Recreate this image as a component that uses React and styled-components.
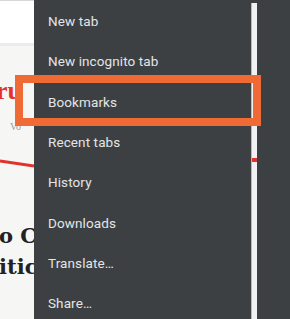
import React from "react";
import styled, { createGlobalStyle } from "styled-components";

const GlobalStyle = createGlobalStyle`
  html, body {
    margin: 0;
    padding: 0;
    background: #3c4043;
  }
  body {
    font-family: Roboto, "Liberation Sans", sans-serif;
  }
`;

const Screen = styled("div")({
  position: "relative",
  display: "flex",
  width: 290,
  height: 319,
  overflow: "hidden",
  backgroundColor: "#3c4043",
});

const Page = styled("div")({
  width: 34,
  flexShrink: 0,
  overflow: "hidden",
  backgroundColor: "#f6f6f5",
  display: "flex",
  flexDirection: "column",
  borderTop: "1px solid #d8d8d8",
});

const PageHeader = styled("div")({
  height: 42,
  backgroundColor: "#ffffff",
  borderBottom: "3px solid #ebebea",
});

const Masthead = styled("div")({
  fontFamily: '"Liberation Serif", "DejaVu Serif", serif',
  fontWeight: 700,
  fontSize: 26,
  color: "#e0342b",
  lineHeight: "30px",
  marginTop: 30,
  marginLeft: -4,
  whiteSpace: "nowrap",
});

const Byline = styled("div")({
  fontFamily: '"Liberation Serif", serif',
  fontSize: 10,
  color: "#9a9a9a",
  marginTop: 15,
  marginLeft: 10,
  whiteSpace: "nowrap",
});

const Rule = styled("svg")({
  display: "block",
  marginTop: 27,
});

const Headline = styled("div")({
  fontFamily: '"DejaVu Serif", "Liberation Serif", serif',
  fontWeight: 700,
  fontSize: 21,
  lineHeight: "31px",
  color: "#222",
  marginTop: 51,
  marginLeft: -1,
  whiteSpace: "nowrap",
});

const Menu = styled("ul")({
  listStyle: "none",
  margin: 0,
  padding: "1px 0 0",
  width: 217,
  flexShrink: 0,
  backgroundColor: "#3c4043",
});

const Item = styled("li")({
  height: 40.3,
  display: "flex",
  alignItems: "center",
  paddingLeft: 14,
  fontSize: 13.5,
  color: "#e4e5e6",
  letterSpacing: 0.1,
});

const Edge = styled("div")({
  width: 5,
  marginTop: 3,
  flexShrink: 0,
  backgroundColor: "#f1f1f1",
  borderLeft: "1px solid #b8b8b8",
  display: "flex",
  flexDirection: "column",
});

const EdgeMark = styled.div`
  height: 4px;
  margin-top: ${({ $top }) => $top}px;
  background-color: #e0342b;
`;

const Side = styled("div")({
  flex: 1,
  backgroundColor: "#3c4043",
});

const Highlight = styled("div")({
  position: "absolute",
  left: 15,
  top: 75,
  width: 246,
  height: 51,
  boxSizing: "border-box",
  border: "8px solid #f06a35",
});

const items = [
  "New tab",
  "New incognito tab",
  "Bookmarks",
  "Recent tabs",
  "History",
  "Downloads",
  "Translate…",
  "Share…",
];

export default function App() {
  return (
    <>
      <GlobalStyle />
      <Screen>
        <Page>
          <PageHeader />
          <Masthead>ru</Masthead>
          <Byline>Vo</Byline>
          <Rule width="34" height="10" viewBox="0 0 34 10">
            <line x1="0" y1="2" x2="34" y2="7" stroke="#e0342b" strokeWidth="3" />
          </Rule>
          <Headline>
            o Cl
            <br />
            itica
          </Headline>
        </Page>
        <Menu>
          {items.map((label) => (
            <Item key={label}>{label}</Item>
          ))}
        </Menu>
        <Edge>
          <EdgeMark $top={155} />
        </Edge>
        <Side />
        <Highlight />
      </Screen>
    </>
  );
}
